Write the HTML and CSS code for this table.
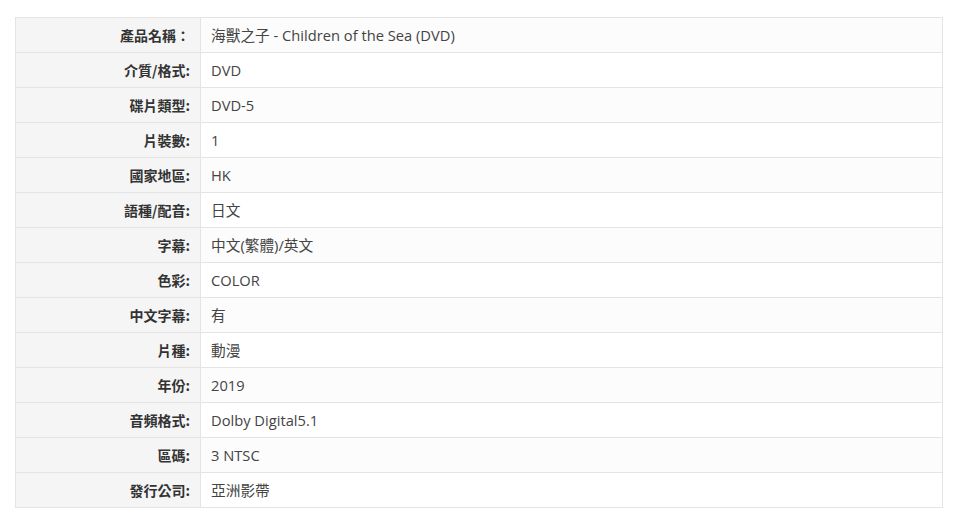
FILE: index.html
```html
<!DOCTYPE html>
<html lang="zh-Hant">
<head>
<meta charset="utf-8">
<link rel="stylesheet" href="styles.css">
</head>
<body>
<table class="spec">
<tbody>
<tr><th>產品名稱：</th><td>海獸之子 - Children of the Sea (DVD)</td></tr>
<tr><th>介質/格式:</th><td>DVD</td></tr>
<tr><th>碟片類型:</th><td>DVD-5</td></tr>
<tr><th>片裝數:</th><td>1</td></tr>
<tr><th>國家地區:</th><td>HK</td></tr>
<tr><th>語種/配音:</th><td>日文</td></tr>
<tr><th>字幕:</th><td>中文(繁體)/英文</td></tr>
<tr><th>色彩:</th><td>COLOR</td></tr>
<tr><th>中文字幕:</th><td>有</td></tr>
<tr><th>片種:</th><td>動漫</td></tr>
<tr><th>年份:</th><td>2019</td></tr>
<tr><th>音頻格式:</th><td>Dolby Digital5.1</td></tr>
<tr><th>區碼:</th><td>3 NTSC</td></tr>
<tr><th>發行公司:</th><td>亞洲影帶</td></tr>
</tbody>
</table>
</body>
</html>
```
FILE: styles.css
```css
html, body {
  margin: 0;
  padding: 0;
  background: #fff;
}
body {
  padding: 17px 14px 0 15px;
  font-family: "Open Sans", "Noto Sans CJK TC", sans-serif;
  font-size: 14px;
  color: #333;
}
.spec {
  width: 928px;
  border-collapse: collapse;
  table-layout: fixed;
}
.spec th, .spec td {
  height: 33px;
  padding: 0 10px 1px;
  border: 1px solid #e4e4e4;
  vertical-align: middle;
  line-height: 20px;
}
.spec th {
  width: 164px;
  text-align: right;
  background: #f5f5f5;
  font-weight: bold;
  color: #333;
  font-family: "Noto Sans CJK TC", sans-serif;
}
.spec td {
  text-align: left;
  color: #444;
  background: #fff;
  font-size: 14.7px;
}
.spec tr:nth-child(odd) td {
  background: #fcfcfc;
}
```
